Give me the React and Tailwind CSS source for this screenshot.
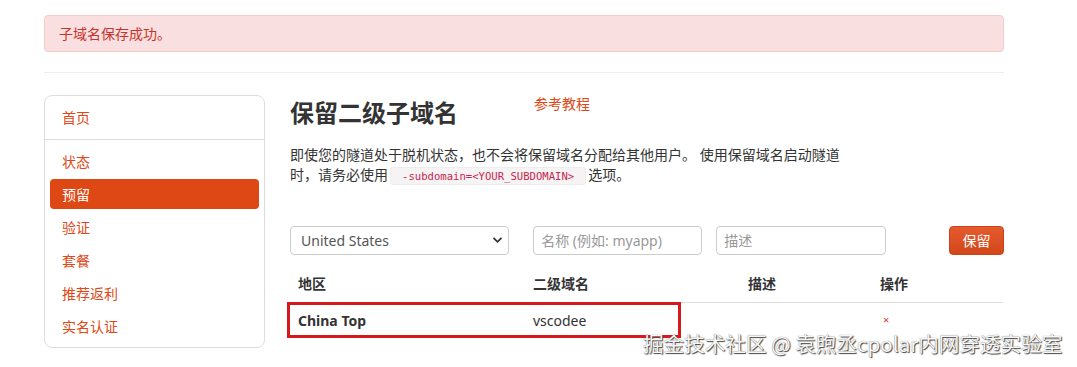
import React from "react";

const font = { fontFamily: '"Noto Sans", "Noto Sans CJK SC", sans-serif' };

export default function App() {
  const items = ["状态", "预留", "验证", "套餐", "推荐返利", "实名认证"];
  return (
    <div className="relative h-[367px] w-[1077px] overflow-hidden bg-white text-[14px] text-[#333]" style={font}>
      <div className="ml-[44px] w-[960px] pt-[15px]">
        <div className="flex h-[37px] items-center rounded-[4px] border border-[#f3cccc] bg-[#f9dfdf] px-[14px] text-[14px] text-[#c7322b]">
          子域名保存成功。
        </div>
        <div className="mt-[20px] h-px bg-[#eeeeee]" />
        <div className="mt-[22px] flex gap-[25px]">
          <div className="h-[253px] w-[221px] shrink-0 rounded-[8px] border border-[#dddddd]">
            <div className="flex h-[44px] items-center border-b border-[#dddddd] px-[17px] text-[#dd4814]">首页</div>
            <div className="flex flex-col gap-[3px] px-[5px] pt-[6px]">
              {items.map((t) => (
                <div
                  key={t}
                  className={
                    t === "预留"
                      ? "flex h-[30px] items-center rounded-[4px] bg-[#dd4814] px-[12px] text-white"
                      : "flex h-[30px] items-center px-[12px] text-[#dd4814]"
                  }
                >
                  {t}
                </div>
              ))}
            </div>
          </div>
          <div className="relative w-[714px]">
            <div className="flex items-start">
              <h2 className="h-[36px] w-[244px] text-[24px] font-bold leading-[36px] text-[#333]">保留二级子域名</h2>
              <a className="text-[14px] leading-[18px] text-[#dd4814]">参考教程</a>
            </div>
            <p className="mt-[14px] max-w-[556px] text-[14px] leading-[20px] text-[#333]">
              即使您的隧道处于脱机状态，也不会将保留域名分配给其他用户。 使用保留域名启动隧道时，请务必使用
              <code
                className="mx-[2px] rounded-[3px] border border-[#ececec] bg-[#f6f3f5] px-[11px] py-[2px] text-[10.6px] text-[#c7254e]"
                style={{ fontFamily: '"DejaVu Sans Mono", "Liberation Mono", monospace' }}
              >
                -subdomain=&lt;YOUR_SUBDOMAIN&gt;
              </code>
              选项。
            </p>
            <div className="mt-[40px] flex h-[29px] items-stretch">
              <div className="relative w-[220px]">
                <select
                  className="h-full w-full appearance-none rounded-[4px] border border-[#cccccc] bg-white pl-[10px] text-[14px] text-[#555]"
                  style={font}
                  defaultValue="us"
                >
                  <option value="us">United States</option>
                </select>
                <svg className="pointer-events-none absolute right-[6px] top-[10px]" width="11" height="8" viewBox="0 0 11 8">
                  <path d="M1.5 1.8 L5.5 5.8 L9.5 1.8" fill="none" stroke="#333" strokeWidth="1.8" />
                </svg>
              </div>
              <input
                className="ml-[24px] w-[169px] rounded-[4px] border border-[#cccccc] px-[7px] text-[14px] placeholder-[#999]"
                placeholder="名称 (例如: myapp)"
                style={font}
              />
              <input
                className="ml-[14px] w-[170px] rounded-[4px] border border-[#cccccc] px-[7px] text-[14px] placeholder-[#999]"
                placeholder="描述"
                style={font}
              />
              <button className="ml-[63px] w-[55px] rounded-[4px] border border-[#c9421a] bg-gradient-to-b from-[#e65b2e] to-[#d2471a] text-[14px] text-white">
                保留
              </button>
            </div>
            <table className="mt-[11px] w-[713px] border-collapse text-[14px]">
              <thead>
                <tr className="border-b border-[#dddddd]">
                  <th className="h-[36px] w-[235px] px-[8px] text-left font-bold">地区</th>
                  <th className="w-[215px] px-[8px] pl-[8px] text-left font-bold">二级域名</th>
                  <th className="w-[132px] px-[8px] text-left font-bold">描述</th>
                  <th className="px-[8px] text-left font-bold">操作</th>
                </tr>
              </thead>
              <tbody>
                <tr>
                  <td className="h-[36px] px-[8px] font-bold">China Top</td>
                  <td className="px-[8px]">vscodee</td>
                  <td className="px-[8px]"></td>
                  <td className="px-[11px] text-[11px] text-[#d0391e]">×</td>
                </tr>
              </tbody>
            </table>
            <div className="pointer-events-none absolute left-[-3px] top-[207px] h-[36px] w-[394px] border-[3px] border-[#d7191c]" />
          </div>
        </div>
      </div>
      <div
        className="absolute left-[643px] top-[330px] text-[20.6px] leading-[26px] text-[#f7f7f7] [text-shadow:1px_1px_1px_#444,0_0_1px_#666]"
        style={{ fontFamily: '"Noto Sans CJK SC", "Noto Sans", sans-serif' }}
      >
        掘金技术社区 @ 袁煦丞cpolar内网穿透实验室
      </div>
    </div>
  );
}
